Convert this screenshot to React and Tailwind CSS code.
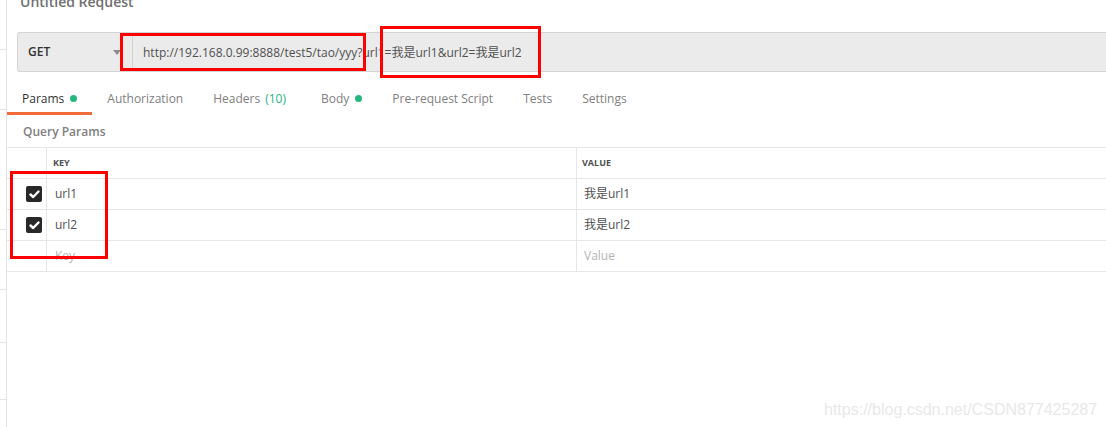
import React from 'react';

const FONT = { fontFamily: '"Open Sans", "Noto Sans CJK SC", sans-serif' };

const tabs = [
  { label: 'Params', dot: true, active: true },
  { label: 'Authorization' },
  { label: 'Headers', count: '(10)', extra: true },
  { label: 'Body', dot: true },
  { label: 'Pre-request Script' },
  { label: 'Tests' },
  { label: 'Settings' },
];

const rows = [
  { key: 'url1', value: '我是url1', checked: true },
  { key: 'url2', value: '我是url2', checked: true },
  { key: 'Key', value: 'Value', placeholder: true },
];

function Checkbox() {
  return (
    <span className="w-[16px] h-[16px] rounded-[2px] bg-[#282828] flex items-center justify-center">
      <svg width="11" height="9" viewBox="0 0 11 9">
        <path d="M1.5 4.5 L4.2 7 L9.5 1.5" fill="none" stroke="#fff" strokeWidth="2.4" strokeLinecap="round" strokeLinejoin="round" />
      </svg>
    </span>
  );
}

export default function App() {
  return (
    <div className="relative w-[1106px] h-[427px] overflow-hidden bg-white flex text-[12px] text-[#505050]" style={FONT}>
      {/* sidebar sliver */}
      <div className="w-[7px] border-r border-[#e4e4e4] flex flex-col">
        <div className="h-[50px] border-b border-[#e4e4e4]" />
        <div className="h-[60px] border-b border-[#e4e4e4]" />
        <div className="h-[120px] border-b border-[#e4e4e4]" />
        <div className="h-[60px] border-b border-[#e4e4e4]" />
        <div className="h-[53px] border-b border-[#e4e4e4]" />
        <div className="h-[57px] border-b border-[#e4e4e4]" />
      </div>

      <div className="flex-1 flex flex-col">
        {/* title */}
        <div className="h-[32px] pl-[13px]">
          <div className="-mt-[9px] text-[14px] text-[#707070] font-semibold">Untitled Request</div>
        </div>

        {/* url bar */}
        <div className="ml-[10px] h-[40px] flex bg-[#ebebeb] border-y border-l border-[#d4d4d4] rounded-l-[3px]">
          <div className="w-[115px] flex items-center justify-between pl-[10px] pr-[11px] border-r border-[#d4d4d4]">
            <span className="font-semibold text-[#333] text-[12px]">GET</span>
            <svg width="8" height="5" viewBox="0 0 8 5"><path d="M0 0 H8 L4 5 Z" fill="#8a8a8a" /></svg>
          </div>
          <div className="flex items-center pl-[10px] pt-[1px] text-[#505050] text-[12px] whitespace-nowrap">
            http://192.168.0.99:8888/test5/tao/yyy?url1=我是url1&amp;url2=我是url2
          </div>
        </div>

        {/* tabs */}
        <div className="h-[43px] flex items-end">
          {tabs.map((t) => (
            <div
              key={t.label}
              className={`h-[43px] pl-[15px] ${t.extra ? 'pr-[20px]' : 'pr-[15px]'} flex items-center pt-[13px] border-b-[3px] ${t.active ? 'border-[#f26b3a] text-[#333]' : 'border-transparent text-[#808080]'}`}
            >
              <span>{t.label}</span>
              {t.count && <span className="ml-[5px] text-[#26b47f]">{t.count}</span>}
              {t.dot && <span className="ml-[6px] w-[7px] h-[7px] rounded-full bg-[#26b47f]" />}
            </div>
          ))}
        </div>

        {/* query params label */}
        <div className="h-[32px] flex items-center pl-[16px] pt-[1px] font-semibold text-[#808080]">Query Params</div>

        {/* table */}
        <div className="border-t border-[#e6e6e6]">
          <div className="h-[31px] flex border-b border-[#e6e6e6]">
            <div className="w-[40px] border-r border-[#e6e6e6]" />
            <div className="w-[530px] border-r border-[#e6e6e6] flex items-center pl-[6px] text-[9px] font-bold text-[#505050]">KEY</div>
            <div className="flex-1 flex items-center pl-[5px] text-[9px] font-bold text-[#505050]">VALUE</div>
          </div>
          {rows.map((r) => (
            <div key={r.key} className="h-[31px] flex border-b border-[#e6e6e6]">
              <div className="w-[40px] border-r border-[#e6e6e6] flex items-center justify-end pr-[4px]">
                {r.checked && <Checkbox />}
              </div>
              <div className={`w-[530px] border-r border-[#e6e6e6] flex items-center pl-[8px] ${r.placeholder ? 'text-[#b4b4b4]' : 'text-[#505050]'}`}>{r.key}</div>
              <div className={`flex-1 flex items-center pl-[7px] ${r.placeholder ? 'text-[#b4b4b4]' : 'text-[#505050]'}`}>{r.value}</div>
            </div>
          ))}
        </div>
      </div>

      {/* red annotation boxes */}
      <div className="absolute left-[120px] top-[33px] w-[246px] h-[38px] border-[3px] border-[#ff0000]" />
      <div className="absolute left-[380px] top-[26px] w-[161px] h-[52px] border-[3px] border-[#ff0000]" />
      <div className="absolute left-[10px] top-[171px] w-[98px] h-[88px] border-[3px] border-[#ff0000]" />

      {/* watermark */}
      <div className="absolute left-[824px] top-[398px] text-[16px] text-[#e8e8e8]" style={{ fontFamily: '"Liberation Sans", Arial, sans-serif' }}>
        https://blog.csdn.net/CSDN877425287
      </div>
    </div>
  );
}
